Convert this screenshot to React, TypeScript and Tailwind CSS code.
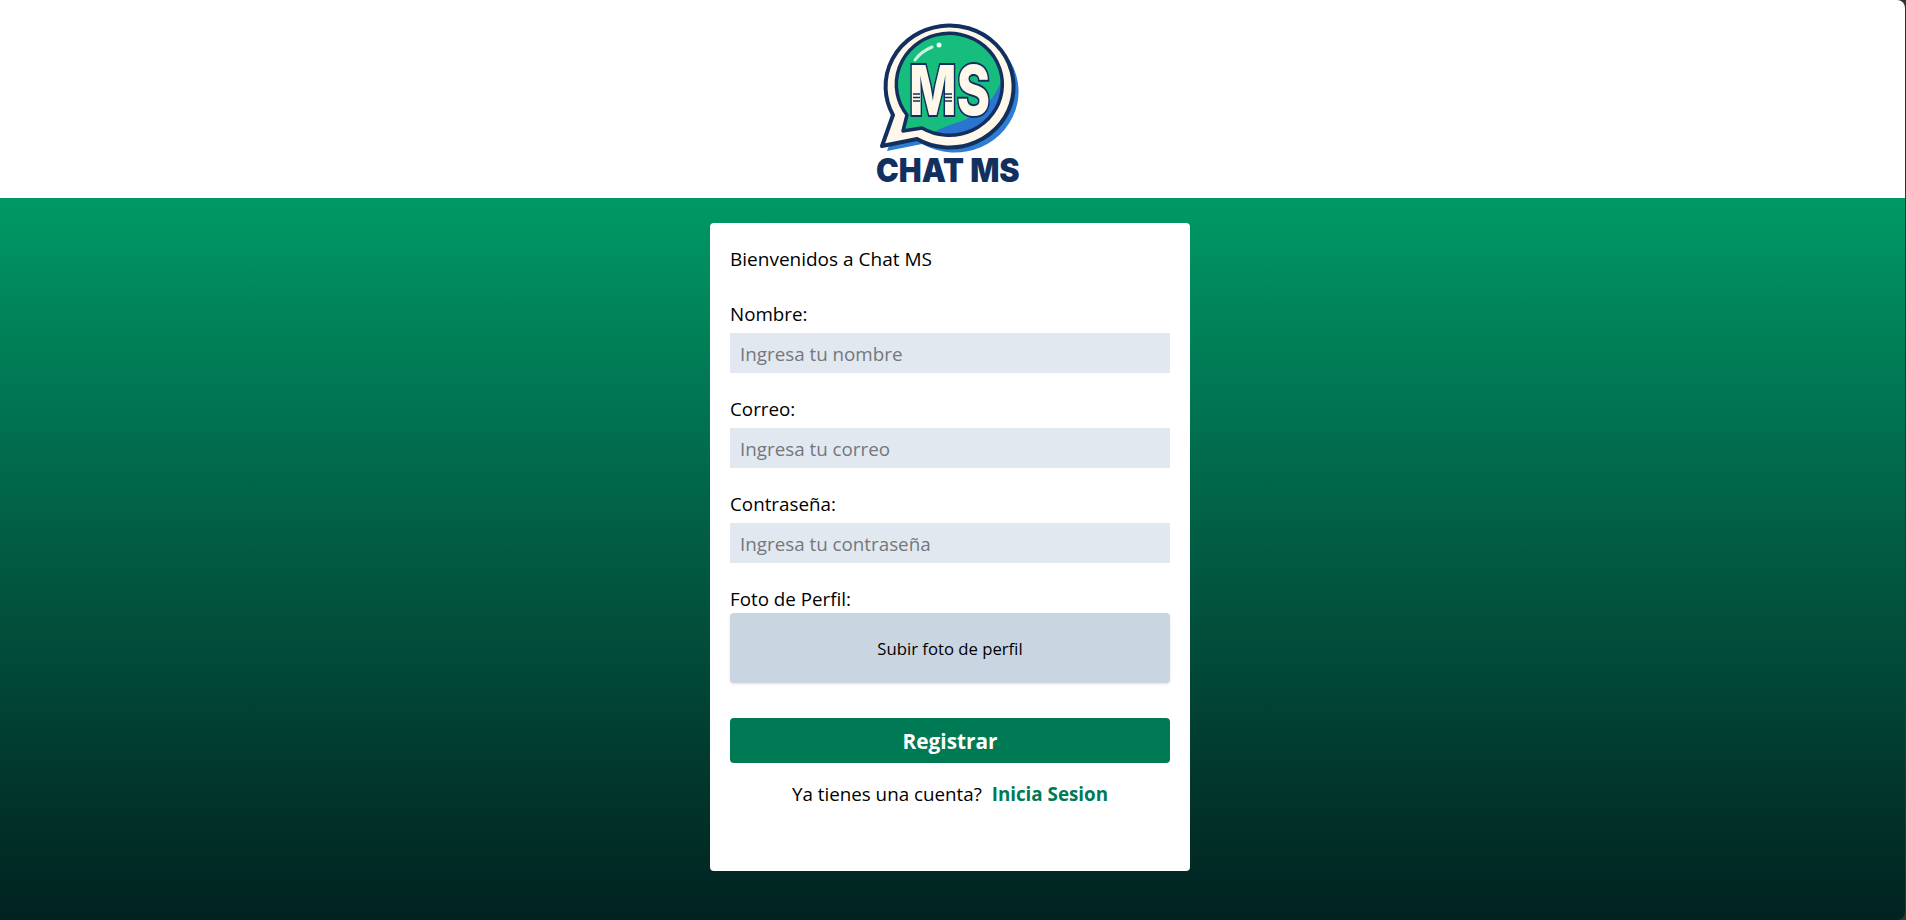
const inputClass =
  "h-10 w-full bg-[#e2e8f0] px-[10px] pt-[2px] text-[18.8px] text-black outline-none placeholder:text-[#74777c]";

const outerBubble = "M893 115A64 61 0 1 1 917 139L882 146Z";
const innerBubble = "M907 115A53 51 0 1 1 922 128L903 131Z";

function Logo() {
  return (
    <svg viewBox="860 18 180 178" className="h-[178px] w-[180px]" aria-label="Chat MS">
      <defs>
        <clipPath id="disc">
          <path d={innerBubble} />
        </clipPath>
      </defs>
      <path d={outerBubble} fill="#2f7dd3" transform="translate(5 5)" />
      <path d={outerBubble} fill="#fff8ea" stroke="#12305f" strokeWidth="4" strokeLinejoin="round" />
      <path d={innerBubble} fill="#17bd7d" />
      <g clipPath="url(#disc)">
        <path d="M930 140C934 124 962 126 980 111 990 103 996 93 1002 80V142Z" fill="#2b74cf" />
      </g>
      <path d={innerBubble} fill="none" stroke="#12305f" strokeWidth="3.5" strokeLinejoin="round" />
      <path d="M915 60C919 54 925 50 932 47" fill="none" stroke="#c9f3df" strokeWidth="3" strokeLinecap="round" />
      <circle cx="939" cy="45" r="2.5" fill="#e8fff6" />
      <text x="909" y="115" textLength="81" lengthAdjust="spacingAndGlyphs" fontFamily="Inter, sans-serif" fontWeight="800" fontSize="69" fill="#fff8ea" stroke="#12305f" strokeWidth="4" paintOrder="stroke">MS</text>
      <path d="M913 94h7M913 97.500h7M913 101h7M945 94h7M945 97.500h7M945 101h7" stroke="#12305f" strokeWidth="1.500" />
      <text transform="translate(876 182) scale(0.925 1)" fontFamily="Inter, sans-serif" fontWeight="900" fontSize="33" fill="#12305f">CHAT MS</text>
    </svg>
  );
}

function Field({ label, placeholder, type = "text" }: { label: string; placeholder: string; type?: string }) {
  return (
    <div className="mb-[25px] flex flex-col">
      <label className="mb-[7px] text-[18.8px] leading-[23px] text-black">{label}</label>
      <input type={type} placeholder={placeholder} className={inputClass} />
    </div>
  );
}

export default function App() {
  return (
    <div className="h-[920px] overflow-hidden bg-[#333333] font-['Open_Sans','Liberation_Sans',sans-serif]">
      <div className="flex h-full w-[1905px] flex-col overflow-hidden rounded-r-lg pr-[5px]">
        <header className="-mr-[5px] flex h-[198px] shrink-0 items-start justify-center bg-white pr-[5px] pt-[18px]">
          <Logo />
        </header>
        <main className="-mr-[5px] flex flex-1 justify-center bg-gradient-to-b from-[#009966] to-[#012220] pr-[5px] pt-[25px]">
          <form className="flex h-[648px] w-[480px] flex-col rounded-[4px] bg-white px-5 pt-[24px]">
            <p className="mb-[31px] text-[19px] leading-[25px] text-black">Bienvenidos a Chat MS</p>
            <Field label="Nombre:" placeholder="Ingresa tu nombre" />
            <Field label="Correo:" placeholder="Ingresa tu correo" type="email" />
            <Field label="Contraseña:" placeholder="Ingresa tu contraseña" type="password" />
            <div className="flex flex-col">
              <label className="mb-[2px] text-[18.8px] leading-[23px] text-black">Foto de Perfil:</label>
              <label className="flex h-[70px] items-center justify-center rounded-[4px] bg-[#cad5e2] pt-[2px] text-[16.700px] text-black shadow">
                Subir foto de perfil
              </label>
            </div>
            <button type="button" className="mt-[35px] h-[45px] rounded-[4px] bg-[#007a55] pt-[2px] text-[20.800px] font-bold text-white">
              Registrar
            </button>
            <p className="mt-[19px] text-center text-[18.8px] leading-[25px] text-black">
              Ya tienes una cuenta? <a className="ml-[5px] font-bold text-[#007a55]">Inicia Sesion</a>
            </p>
          </form>
        </main>
      </div>
    </div>
  );
}
